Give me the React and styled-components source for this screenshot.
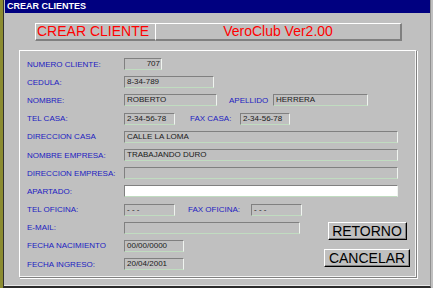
import React from "react";
import styled, { createGlobalStyle } from "styled-components";

const Global = createGlobalStyle`
  html, body { margin: 0; padding: 0; background: #c0c0c0; }
  * { box-sizing: border-box; }
`;

const Frame = styled.div`
  display: flex;
  width: 433px;
  height: 288px;
  background: #c0c0c0;
  border-left: 3px solid #8c8c30;
  padding-right: 2px;
  font-family: "Liberation Sans", Arial, sans-serif;
`;

const Window = styled.div`
  flex: 1;
  display: flex;
  flex-direction: column;
  border-left: 1px solid #303030;
  border-right: 1px solid #909090;
  border-bottom: 2px solid #2a2a2a;
  box-shadow: inset 0 -3px 0 -2px #e8e8e8;
`;

const TitleBar = styled.div`
  height: 13px;
  margin-left: 1px;
  background: #000080;
  color: #fff;
  font-weight: bold;
  font-size: 9px;
  line-height: 13px;
  padding-left: 2px;
  white-space: nowrap;
`;

const Header = styled.div`
  display: flex;
  margin: 10px 0 0 31px;
  height: 18px;
`;

const HeaderCell = styled.div`
  width: ${(p) => p.$w}px;
  height: 18px;
  border-top: 1px solid #ffffff;
  border-left: 1px solid #ffffff;
  border-bottom: 2px solid #808080;
  border-right: ${(p) => (p.$last ? "2px solid #808080" : "0")};
  color: #ff0000;
  font-size: 14px;
  line-height: 15px;
  padding-left: ${(p) => (p.$center ? 0 : 1)}px;
  text-align: ${(p) => (p.$center ? "center" : "left")};
  white-space: nowrap;
`;

const GroupBox = styled.div`
  margin: 9px 0 0 15px;
  width: 398px;
  height: 228px;
  border-top: 1px solid #ffffff;
  border-left: 1px solid #ffffff;
  border-right: 1px solid #808080;
  border-bottom: 1px solid #808080;
  box-shadow: inset -1px -1px 0 #f4f4f4, 1px 1px 0 #ffffff;
  padding: 4px 0 0 7px;
  display: grid;
  grid-template-columns: 97px 194px 1fr;
  grid-template-rows: repeat(12, 18.2px);
  align-items: center;
`;

const Label = styled.div`
  grid-column: 1;
  grid-row: ${(p) => p.$row};
  color: #1c1cc0;
  font-size: 8px;
  white-space: nowrap;
`;

const SubLabel = styled.div`
  flex: none;
  width: ${(p) => p.$w}px;
  margin-left: ${(p) => p.$ml}px;
  color: #1c1cc0;
  font-size: 8px;
  white-space: nowrap;
`;

const Content = styled.div`
  display: flex;
  align-items: center;
  grid-row: ${(p) => p.$row};
  grid-column: ${(p) => (p.$wide ? "2 / 4" : "2 / 3")};
`;

const Field = styled.div`
  flex: none;
  width: ${(p) => p.$w}px;
  height: 12px;
  background: ${(p) => (p.$white ? "#ffffff" : "#c0c0c0")};
  border-top: 1px solid #808080;
  border-left: 1px solid #808080;
  border-bottom: 1px solid #c0dcc0;
  border-right: 1px solid #f0f4f0;
  color: #1a1a1a;
  font-size: 8px;
  line-height: 10px;
  padding: 0 ${(p) => (p.$right ? 1 : 0)}px 0 2px;
  text-align: ${(p) => (p.$right ? "right" : "left")};
  white-space: nowrap;
  overflow: hidden;
`;

const ButtonColumn = styled.div`
  grid-column: 3;
  grid-row: 10 / span 3;
  align-self: stretch;
  display: flex;
  flex-direction: column;
  align-items: center;
  padding-top: 3px;
  gap: 9px;
`;

const Button = styled.button`
  width: ${(p) => p.$w}px;
  height: 18px;
  padding: 0;
  margin: 0;
  background: #c0c0c0;
  border-top: 1px solid #ffffff;
  border-left: 1px solid #ffffff;
  border-right: 1px solid #000000;
  border-bottom: 1px solid #000000;
  box-shadow: inset -1px -1px 0 #808080;
  font-family: "Liberation Sans", Arial, sans-serif;
  font-size: 14px;
  line-height: 16px;
  color: #000;
`;

const rows = [
  { label: "NUMERO CLIENTE:", fields: [{ w: 38, v: "707", right: true }] },
  { label: "CEDULA:", fields: [{ w: 90, v: "8-34-789" }] },
  {
    label: "NOMBRE:",
    fields: [{ w: 93, v: "ROBERTO" }],
    sub: { label: "APELLIDO", ml: 12, w: 44, field: { w: 95, v: "HERRERA" } },
  },
  {
    label: "TEL CASA:",
    fields: [{ w: 51, v: "2-34-56-78" }],
    sub: { label: "FAX CASA:", ml: 15, w: 50, field: { w: 50, v: "2-34-56-78" } },
  },
  { label: "DIRECCION CASA", wide: true, fields: [{ w: 274, v: "CALLE LA LOMA" }] },
  { label: "NOMBRE EMPRESA:", wide: true, fields: [{ w: 274, v: "TRABAJANDO DURO" }] },
  { label: "DIRECCION EMPRESA:", wide: true, fields: [{ w: 274, v: "" }] },
  { label: "APARTADO:", wide: true, fields: [{ w: 274, v: "", white: true }] },
  {
    label: "TEL OFICINA:",
    fields: [{ w: 51, v: "- - -" }],
    sub: { label: "FAX OFICINA:", ml: 13, w: 63, field: { w: 51, v: "- - -" } },
  },
  { label: "E-MAIL:", fields: [{ w: 176, v: "" }] },
  { label: "FECHA NACIMIENTO", fields: [{ w: 60, v: "00/00/0000" }] },
  { label: "FECHA INGRESO:", fields: [{ w: 60, v: "20/04/2001" }] },
];

export default function App() {
  return (
    <>
      <Global />
      <Frame>
        <Window>
          <TitleBar>CREAR CLIENTES</TitleBar>
          <Header>
            <HeaderCell $w={120}>CREAR CLIENTE</HeaderCell>
            <HeaderCell $w={247} $last $center>
              VeroClub Ver2.00
            </HeaderCell>
          </Header>
          <GroupBox>
            {rows.map((r, idx) => (
              <React.Fragment key={r.label}>
                <Label $row={idx + 1}>{r.label}</Label>
                <Content $row={idx + 1} $wide={r.wide}>
                  {r.fields.map((f, i) => (
                    <Field key={i} $w={f.w} $right={f.right} $white={f.white}>
                      {f.v}
                    </Field>
                  ))}
                  {r.sub && (
                    <>
                      <SubLabel $ml={r.sub.ml} $w={r.sub.w}>
                        {r.sub.label}
                      </SubLabel>
                      <Field $w={r.sub.field.w}>{r.sub.field.v}</Field>
                    </>
                  )}
                </Content>
              </React.Fragment>
            ))}
            <ButtonColumn>
              <Button $w={79}>RETORNO</Button>
              <Button $w={86}>CANCELAR</Button>
            </ButtonColumn>
          </GroupBox>
        </Window>
      </Frame>
    </>
  );
}
